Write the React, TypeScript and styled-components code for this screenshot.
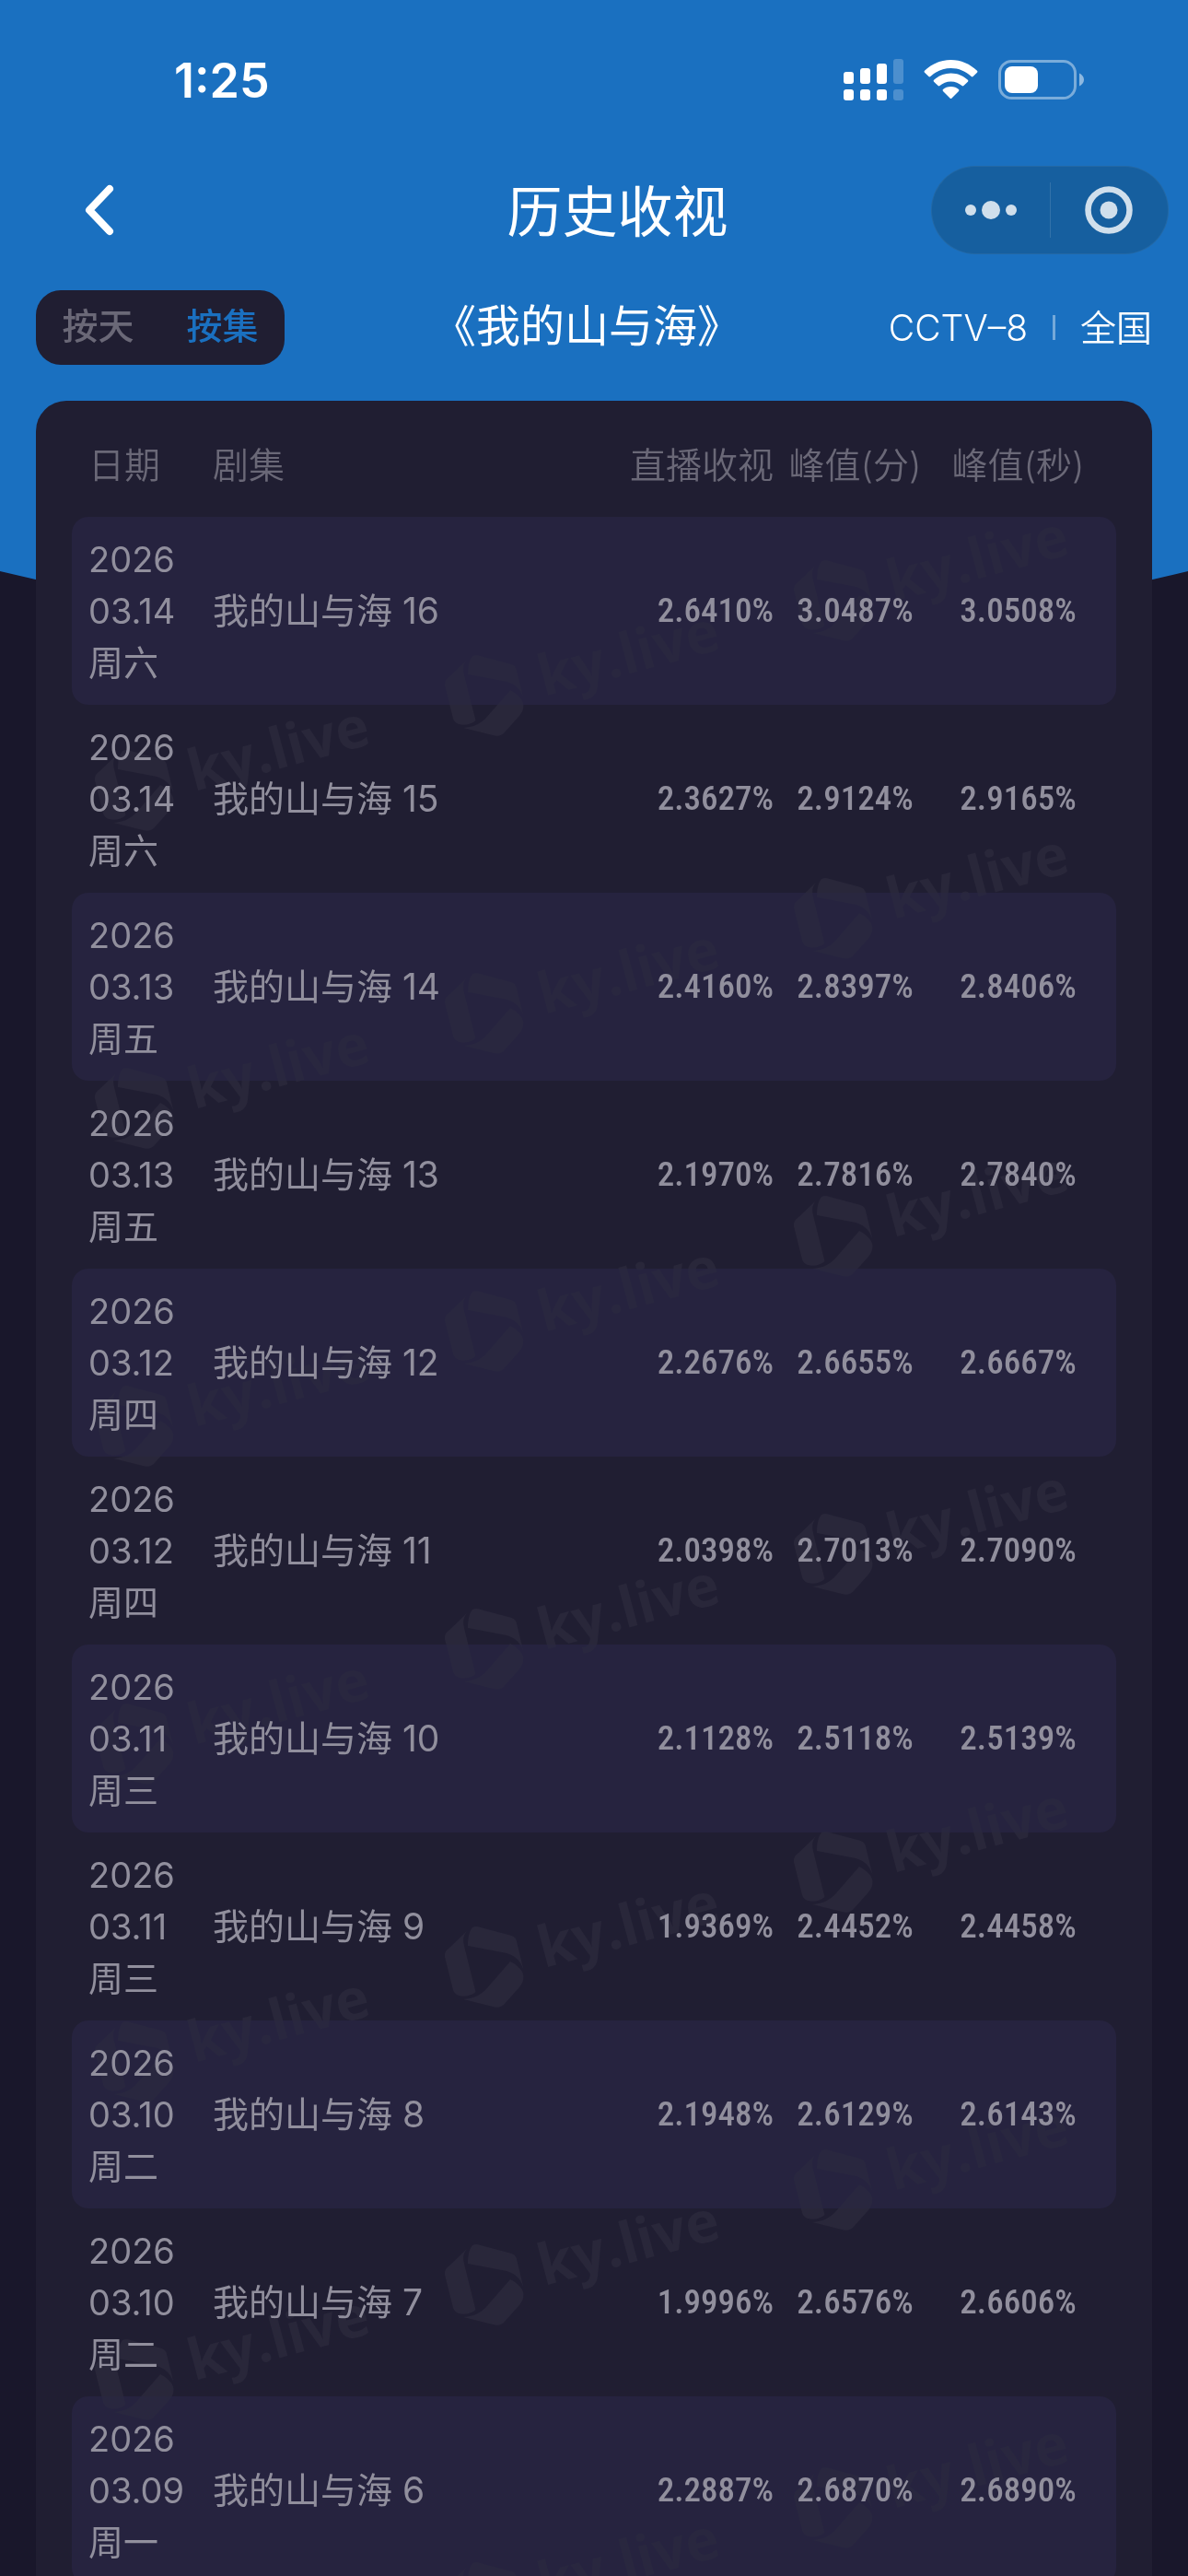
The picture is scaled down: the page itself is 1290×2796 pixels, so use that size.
import React from "react";
import styled, { createGlobalStyle } from "styled-components";

const sans = `Inter, "Noto Sans CJK SC", sans-serif`;
const figures = `"Roboto Condensed", "Liberation Sans Narrow", Roboto, sans-serif`;

const GlobalStyle = createGlobalStyle`
  *, *::before, *::after { box-sizing: border-box; }
  body { margin: 0; background: #19172b; }
  button { margin: 0; padding: 0; border: 0; background: none; color: inherit; font: inherit; cursor: pointer; }
`;

const Screen = styled.div`
  position: relative;
  isolation: isolate;
  display: flex;
  flex-direction: column;
  height: 100vh;
  overflow: hidden;
  background: #19172b;
  color: #fff;
  font-family: ${sans};
  font-size: 39px;
  font-weight: 350;
  line-height: 56px;
`;

const Backdrop = styled.div`
  position: absolute;
  inset: 0 0 auto;
  z-index: -1;
  height: 770px;
  background: #1a70c0;
  clip-path: polygon(0 0, 100% 0, 100% 620px, 50% 770px, 0 620px);
`;

const StatusBar = styled.div`
  display: flex;
  align-items: center;
  justify-content: space-between;
  height: 174px;
  padding: 0 112px 0 189px;
`;

const Clock = styled.time`
  padding-top: 2px;
  font-size: 52px;
  font-weight: 600;
`;

const NavBar = styled.header`
  display: grid;
  grid-template-columns: 1fr auto 1fr;
  align-items: center;
  height: 108px;
  padding: 0 21px 0 72px;
`;

const BackButton = styled.button`
  display: flex;
  align-items: center;
  justify-content: center;
  justify-self: start;
  width: 72px;
  height: 72px;
`;

const Title = styled.h1`
  margin: 0;
  padding-top: 4px;
  font-size: 60px;
  font-weight: 400;
  line-height: 84px;
`;

const Capsule = styled.div`
  display: flex;
  align-items: center;
  justify-self: end;
  width: 258px;
  height: 96px;
  border: 1px solid rgba(255, 255, 255, 0.06);
  border-radius: 48px;
  background: #165f9f;
`;

const CapsuleButton = styled.button`
  display: flex;
  flex: 1;
  align-items: center;
  justify-content: center;
  height: 100%;
`;

const Divider = styled.span<{ $height: number; $width: number; $color: string }>`
  width: ${(p) => p.$width}px;
  height: ${(p) => p.$height}px;
  background: ${(p) => p.$color};
`;

const FilterBar = styled.div`
  display: flex;
  align-items: center;
  justify-content: space-between;
  margin-top: 33px;
  padding: 0 39px;
`;

const Segment = styled.div`
  display: flex;
  width: 270px;
  height: 81px;
  padding-bottom: 4px;
  border-radius: 27px;
  background: #201e32;
`;

const SegmentButton = styled.button<{ $active?: boolean }>`
  flex: 1;
  color: ${(p) => (p.$active ? "#1a70c0" : "#6a6877")};
  font-weight: 500;
`;

const ShowName = styled.h2`
  margin: 0;
  padding-bottom: 4px;
  font-size: 48px;
  font-weight: 400;
  line-height: 66px;
`;

const Scope = styled.div`
  display: flex;
  align-items: center;
  gap: 27px;
`;

const Panel = styled.main`
  position: relative;
  flex: 1;
  min-height: 0;
  margin: 39px 39px 0;
  padding: 13px 39px 0;
  overflow: hidden;
  border-radius: 33px 33px 0 0;
  background: #201e32;
`;

const Ratings = styled.table`
  width: 100%;
  border-spacing: 0;
  table-layout: fixed;
`;

const HeadCell = styled.th<{ $align?: string; $width?: number }>`
  width: ${(p) => (p.$width ? `${p.$width}px` : "auto")};
  height: 113px;
  padding: 0;
  color: #6a6877;
  font-weight: 350;
  text-align: ${(p) => p.$align || "left"};
  white-space: nowrap;

  &:first-child { padding-left: 18px; }
  &:last-child { padding-right: 18px; }
`;

const Cell = styled.td<{ $align?: string }>`
  height: 204px;
  padding: 0;
  color: #918f9d;
  font-weight: 400;
  text-align: ${(p) => p.$align || "left"};
  white-space: nowrap;

  &:first-child { padding-left: 18px; border-radius: 18px 0 0 18px; }
  &:last-child { padding-right: 18px; border-radius: 0 18px 18px 0; }
`;

const Row = styled.tr`
  &:nth-child(odd) ${Cell} { background: #26233f; }
`;

const DateCell = styled(Cell)`
  font-size: 38px;
`;

const Figure = styled(Cell)`
  font-family: ${figures};
  font-size: 37px;
  font-weight: 500;
`;

const Line = styled.span`
  display: block;
`;

const WatermarkLayer = styled.div`
  position: absolute;
  inset: 128px 0 0;
  mix-blend-mode: lighten;
  pointer-events: none;
`;

const WatermarkBand = styled.svg`
  display: block;
  width: 100%;
  height: 345px;
  overflow: visible;
`;

type Episode = { date: string; day: string; no: number; live: string; minute: string; second: string };

const episodes: Episode[] = [
  { date: "03.14", day: "周六", no: 16, live: "2.6410%", minute: "3.0487%", second: "3.0508%" },
  { date: "03.14", day: "周六", no: 15, live: "2.3627%", minute: "2.9124%", second: "2.9165%" },
  { date: "03.13", day: "周五", no: 14, live: "2.4160%", minute: "2.8397%", second: "2.8406%" },
  { date: "03.13", day: "周五", no: 13, live: "2.1970%", minute: "2.7816%", second: "2.7840%" },
  { date: "03.12", day: "周四", no: 12, live: "2.2676%", minute: "2.6655%", second: "2.6667%" },
  { date: "03.12", day: "周四", no: 11, live: "2.0398%", minute: "2.7013%", second: "2.7090%" },
  { date: "03.11", day: "周三", no: 10, live: "2.1128%", minute: "2.5118%", second: "2.5139%" },
  { date: "03.11", day: "周三", no: 9, live: "1.9369%", minute: "2.4452%", second: "2.4458%" },
  { date: "03.10", day: "周二", no: 8, live: "2.1948%", minute: "2.6129%", second: "2.6143%" },
  { date: "03.10", day: "周二", no: 7, live: "1.9996%", minute: "2.6576%", second: "2.6606%" },
  { date: "03.09", day: "周一", no: 6, live: "2.2887%", minute: "2.6870%", second: "2.6890%" },
];

const StatusIcons = () => (
  <svg width="262" height="46" viewBox="0 0 262 46" fill="#fff" aria-hidden="true">
    <rect x="0" y="14" width="11" height="13" rx="3" />
    <rect x="18" y="10" width="11" height="17" rx="3" />
    <rect x="36" y="5" width="11" height="22" rx="3" />
    <rect x="54" y="0" width="11" height="27" rx="3" opacity="0.22" />
    <rect x="0" y="33" width="11" height="12" rx="3" />
    <rect x="18" y="33" width="11" height="12" rx="3" />
    <rect x="36" y="33" width="11" height="12" rx="3" />
    <rect x="54" y="33" width="11" height="12" rx="3" opacity="0.22" />
    <path d="M116.500 1C127.500 1 137.500 5.500 145 12.800C145.600 13.400 145.600 14.100 145 14.700L140.600 19C140 19.600 139.300 19.600 138.700 19C132.800 13.400 125 10 116.500 10C108 10 100.200 13.400 94.300 19C93.700 19.600 93 19.600 92.400 19L88 14.700C87.400 14.100 87.400 13.400 88 12.800C95.500 5.500 105.500 1 116.500 1Z" />
    <path d="M116.500 15.500C123.700 15.500 130 18.300 134.900 22.800C135.500 23.400 135.500 24.100 134.900 24.700L130.400 29.100C129.800 29.700 129.200 29.700 128.500 29.100C125.300 26.300 121.200 24.500 116.500 24.500C111.800 24.500 107.700 26.300 104.500 29.100C103.800 29.700 103.200 29.700 102.600 29.100L98.100 24.700C97.500 24.100 97.500 23.400 98.100 22.800C103 18.300 109.300 15.500 116.500 15.500Z" />
    <path d="M116.500 30C120 30 122.800 31.200 125 33.100C125.600 33.700 125.600 34.300 125 34.900L117.500 42.400C116.800 43.100 116.200 43.100 115.500 42.400L108 34.900C107.400 34.300 107.400 33.700 108 33.100C110.200 31.200 113 30 116.500 30Z" />
    <rect x="169.500" y="2.500" width="82" height="40" rx="13" fill="none" stroke="#fff" strokeWidth="3" opacity="0.42" />
    <rect x="175" y="8" width="36" height="29" rx="8" />
    <path d="M256 15.500C259 17 261 19.500 261 22.500C261 25.500 259 28 256 29.500Z" opacity="0.5" />
  </svg>
);

const BackIcon = () => (
  <svg width="40" height="60" viewBox="0 0 40 60" fill="none" aria-hidden="true">
    <path d="M31 7L9 30L31 53" stroke="#fff" strokeWidth="8" strokeLinecap="round" strokeLinejoin="round" />
  </svg>
);

const MoreIcon = () => (
  <svg width="58" height="22" viewBox="0 0 58 22" fill="#d0dfec" aria-hidden="true">
    <circle cx="7" cy="11" r="6" />
    <circle cx="29" cy="11" r="10" />
    <circle cx="51" cy="11" r="6" />
  </svg>
);

const TargetIcon = () => (
  <svg width="52" height="52" viewBox="0 0 52 52" fill="none" aria-hidden="true">
    <circle cx="26" cy="26" r="22.500" stroke="#d0dfec" strokeWidth="6.500" />
    <circle cx="26" cy="26" r="9.500" fill="#d0dfec" />
  </svg>
);

const Mark = ({ x, y }: { x: number; y: number }) => (
  <g transform={`translate(${x} ${y})`}>
    <path d="M-19 -39C-23 -34 -23.500 -30 -22 -23L-9.500 27C-14 31 -21 33 -28 31C-31 30 -33 28 -34 25L-43 -11C-43.500 -15 -42 -18 -39 -20Z" />
    <path d="M-13 -43C-10 -44.500 -7 -44 -4 -43L28 -34.500C32 -33.500 34 -32 35 -28L42.500 3C39 -7 34 -12 24 -15L-18 -23C-18 -31 -17 -38 -13 -43Z" />
    <path d="M28 -6C36 -2 42 4 42.500 10C42.500 15 41 18 38 22L21 41C17 44 13 44.500 9 43L-23 35C-11 34 -6 31 1 25Z" />
    <text transform="rotate(-15)" x="62" y="18" fontFamily="Open Sans, Noto Sans, sans-serif" fontSize="62" fontWeight="700">
      ky.live
    </text>
  </g>
);

const Watermark = () => (
  <WatermarkLayer aria-hidden="true">
    {Array.from({ length: 7 }, (_, i) => (
      <WatermarkBand key={i} viewBox="0 0 1212 345" fill="#29273a">
        <Mark x={107} y={295} />
        <Mark x={487} y={192} />
        <Mark x={866} y={89} />
      </WatermarkBand>
    ))}
  </WatermarkLayer>
);

export default function App() {
  return (
    <Screen>
      <GlobalStyle />
      <Backdrop />
      <StatusBar>
        <Clock>1:25</Clock>
        <StatusIcons />
      </StatusBar>
      <NavBar>
        <BackButton aria-label="返回">
          <BackIcon />
        </BackButton>
        <Title>历史收视</Title>
        <Capsule>
          <CapsuleButton aria-label="更多">
            <MoreIcon />
          </CapsuleButton>
          <Divider $width={1} $height={60} $color="rgba(255, 255, 255, 0.12)" />
          <CapsuleButton aria-label="关闭">
            <TargetIcon />
          </CapsuleButton>
        </Capsule>
      </NavBar>
      <FilterBar>
        <Segment>
          <SegmentButton>按天</SegmentButton>
          <SegmentButton $active>按集</SegmentButton>
        </Segment>
        <ShowName>《我的山与海》</ShowName>
        <Scope>
          <span>CCTV–8</span>
          <Divider $width={3} $height={27} $color="rgba(255, 255, 255, 0.4)" />
          <span>全国</span>
        </Scope>
      </FilterBar>
      <Panel>
        <Ratings>
          <thead>
            <tr>
              <HeadCell $width={153}>日期</HeadCell>
              <HeadCell>剧集</HeadCell>
              <HeadCell $align="right" $width={177}>直播收视</HeadCell>
              <HeadCell $align="center" $width={177}>峰值(分)</HeadCell>
              <HeadCell $align="center" $width={195}>峰值(秒)</HeadCell>
            </tr>
          </thead>
          <tbody>
            {episodes.map((e) => (
              <Row key={e.no}>
                <DateCell>
                  <Line>2026</Line>
                  <Line>{e.date}</Line>
                  <Line>{e.day}</Line>
                </DateCell>
                <Cell>我的山与海 {e.no}</Cell>
                <Figure $align="right">{e.live}</Figure>
                <Figure $align="center">{e.minute}</Figure>
                <Figure $align="center">{e.second}</Figure>
              </Row>
            ))}
          </tbody>
        </Ratings>
        <Watermark />
      </Panel>
    </Screen>
  );
}
